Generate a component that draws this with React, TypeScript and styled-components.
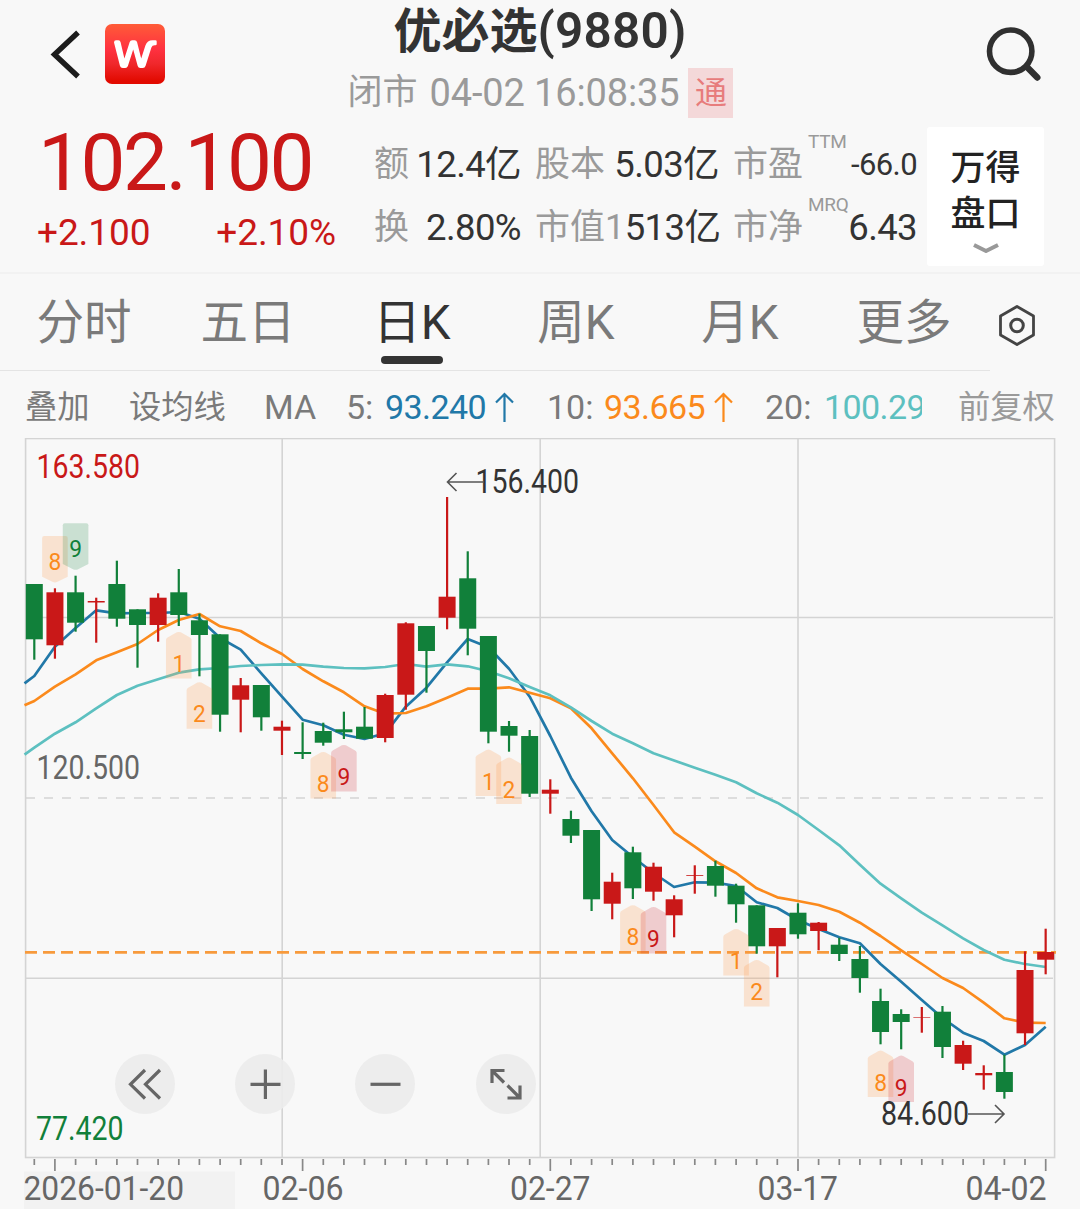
import React from "react";
import styled, { createGlobalStyle } from "styled-components";

const RED = "#c91818";
const GREEN = "#11803a";
const LINE = "#d4d4d4";
const BLUE = "#2178a8";
const ORANGE = "#fb8a1c";
const TEAL = "#5dc0c0";

const GlobalStyle = createGlobalStyle`
  * { box-sizing: border-box; }
  body {
    margin: 0;
    background: #f8f8f8;
    font-family: Roboto, "Noto Sans CJK SC", sans-serif;
  }
`;

const Screen = styled.div`
  width: 1080px;
  height: 1209px;
  overflow: hidden;
  display: flex;
  flex-direction: column;
  background: #f8f8f8;
  color: #333;
`;

/* ---------- header ---------- */

const Header = styled.header`
  height: 127px;
  display: grid;
  grid-template-columns: 240px 1fr 240px;
`;

const HeaderLeft = styled.div`
  display: flex;
  align-items: center;
  gap: 25px;
  height: 108px;
  padding-left: 50px;
`;

const HeaderRight = styled.div`
  display: flex;
  align-items: center;
  justify-content: flex-end;
  height: 108px;
  padding-right: 38px;
`;

const Logo = styled.div`
  width: 60px;
  height: 60px;
  border-radius: 7px;
  background: linear-gradient(#ff5c38, #ff3140 42%, #f0282c 66%, #e20a00 95%);
`;

const HeaderCenter = styled.div`
  display: flex;
  flex-direction: column;
  align-items: center;
`;

const Title = styled.h1`
  margin: 0;
  height: 68px;
  line-height: 62px;
  font-size: 48px;
  font-weight: 600;
  white-space: nowrap;
  span {
    font-size: 49.5px;
    letter-spacing: 0.2px;
  }
`;

const Status = styled.div`
  display: flex;
  align-items: center;
  height: 50px;
  padding-left: 1px;
  color: #9a9a9a;
  font-size: 35px;
  line-height: 52px;
  white-space: nowrap;
`;

const Clock = styled.span`
  font-size: 38px;
  margin: 0 9px 0 12px;
  letter-spacing: -0.15px;
`;

const Tag = styled.span`
  width: 45px;
  height: 50px;
  line-height: 50px;
  text-align: center;
  font-size: 32px;
  color: #e77c7c;
  background: #f4d8d9;
`;

/* ---------- quote ---------- */

const Quote = styled.section`
  height: 145px;
  display: flex;
  padding-left: 37px;
`;

const PriceBlock = styled.div`
  width: 337px;
  color: ${RED};
`;

const Price = styled.div`
  height: 76px;
  line-height: 73px;
  font-size: 80px;
  letter-spacing: -2.4px;
  padding-left: 1px;
`;

const Changes = styled.div`
  display: flex;
  justify-content: space-between;
  width: 299px;
  height: 60px;
  line-height: 60px;
  font-size: 37px;
  letter-spacing: -0.1px;
`;

const Stats = styled.div`
  display: grid;
  grid-template-columns: 147px 184px 184px;
  grid-template-rows: 63px 63px;
  column-gap: 14px;
  padding-top: 6px;
`;

const Stat = styled.div`
  display: flex;
  align-items: flex-start;
  line-height: 64px;
  white-space: nowrap;
`;

const StatLabel = styled.span`
  font-size: 35px;
  color: #9a9a9a;
`;

const StatSup = styled.sup`
  font-size: 19px;
  line-height: 20px;
  margin: -1px 0 0 5px;
  width: 0;
  letter-spacing: -0.3px;
  color: #9a9a9a;
`;

const StatValue = styled.span<{ $small?: boolean }>`
  margin-left: auto;
  font-size: ${(p) => (p.$small ? 31 : 36.5)}px;
  letter-spacing: -0.6px;
  color: #333;
`;

const OrderBook = styled.button`
  margin-left: 10px;
  width: 117px;
  height: 139px;
  border: 0;
  border-radius: 3px;
  padding: 15px 0 0;
  background: #fff;
  color: #222;
  font: 500 35px/46px "Noto Sans CJK SC", sans-serif;
  display: flex;
  flex-direction: column;
  align-items: center;
  svg { margin-top: 8px; }
`;

/* ---------- tabs ---------- */

const Tabs = styled.nav`
  height: 99px;
  display: flex;
  padding-left: 2px;
  border-top: 2px solid #f2f2f2;
  background: linear-gradient(#e4e4e4, #e4e4e4) 0 100% / 990px 1px no-repeat;
`;

const Tab = styled.div<{ $active?: boolean }>`
  width: 164px;
  display: flex;
  flex-direction: column;
  align-items: center;
  font-size: 47.5px;
  line-height: 82px;
  padding-top: 8px;
  color: ${(p) => (p.$active ? "#333" : "#7a7a7a")};
  &::after {
    content: "";
    margin-top: -8px;
    width: 62px;
    height: 8px;
    border-radius: 4px;
    background: ${(p) => (p.$active ? "#333" : "transparent")};
  }
`;

const TabSettings = styled.div`
  padding: 30px 0 0 12px;
`;

/* ---------- moving averages ---------- */

const Legend = styled.div`
  height: 67px;
  display: grid;
  grid-template-columns: 104px 135px 82px 39px 110px 52px 57px 110px 51px 59px 98px 36px 1fr;
  padding-left: 25px;
  font-size: 34px;
  line-height: 72px;
  color: #7a7a7a;
  white-space: nowrap;
`;

const LegendLink = styled.span<{ $muted?: boolean }>`
  font-size: 32.3px;
  color: ${(p) => (p.$muted ? "#9a9a9a" : "inherit")};
`;

const LegendValue = styled.span<{ $color: string }>`
  display: flex;
  align-items: center;
  overflow: hidden;
  letter-spacing: -0.6px;
  color: ${(p) => p.$color};
`;

/* ---------- chart ---------- */

const ChartArea = styled.section`
  position: relative;
  height: 771px;
`;

const ChartSvg = styled.svg`
  display: block;
`;

const Controls = styled.div`
  position: absolute;
  left: 114.5px;
  top: 616.3px;
  display: flex;
  gap: 60.4px;
`;

const RoundButton = styled.button`
  width: 60px;
  height: 60px;
  border: 0;
  border-radius: 50%;
  padding: 0;
  background: rgba(236, 236, 236, 0.93);
  svg { display: block; }
`;

type Candle = [up: 0 | 1, top: number, bottom: number, high: number, low: number];

const candles: Candle[] = [
  [0, 584, 639.3, 584, 659.7], [1, 592.3, 645.3, 588.3, 658.7], [0, 592.3, 622.7, 575.7, 631.7],
  [1, 601, 602.5, 597.7, 642.7], [0, 584, 618.7, 560.7, 626.7], [0, 609.3, 625, 609.3, 667.7],
  [1, 597.7, 625, 593.3, 641.7], [0, 592.3, 615, 569, 626], [0, 620.3, 635, 613.7, 676.3],
  [0, 634.3, 714.7, 634.3, 731.7], [1, 685.3, 699.7, 678, 732.3], [0, 685, 717.3, 685, 730.7],
  [1, 726.7, 730.7, 720.7, 755], [0, 752, 754, 722.3, 759], [0, 731, 742.7, 722.7, 745.7],
  [0, 729.3, 732.3, 711.7, 739], [0, 726.7, 738.7, 707, 738.7], [1, 695, 738, 693.7, 742.3],
  [1, 623.3, 694.7, 622.3, 709.7], [0, 626, 651, 626, 692.7], [1, 596.7, 617.7, 497, 629.3],
  [0, 578.3, 628.7, 551.3, 655.3], [0, 636, 731.7, 636, 743.3], [0, 726, 735.7, 721, 751.7],
  [0, 736, 793.7, 730, 797], [1, 789.7, 793.7, 779.3, 813.7], [0, 819, 835.7, 810.7, 843],
  [0, 830, 899.3, 830, 911], [1, 881.7, 903.7, 872.7, 919.3], [0, 852.3, 888.3, 846.7, 899],
  [1, 866.7, 891.7, 862.7, 900.7], [1, 899.3, 915.3, 895.3, 937.3], [1, 875, 875.8, 865.3, 893.7],
  [0, 866, 885.7, 860.7, 896.7], [0, 885.7, 904.3, 883.7, 922.7], [0, 905.3, 946.3, 905.3, 953.7],
  [1, 928, 946.3, 928, 977.3], [0, 912.7, 934.3, 903.3, 938.7], [1, 922.7, 931, 922, 950.3],
  [0, 944.7, 954, 937.7, 961], [0, 959, 978, 946, 992.7], [0, 1001, 1032, 988.7, 1044.3],
  [0, 1014, 1022, 1009.3, 1049.3], [1, 1017, 1017.6, 1007, 1032.7], [0, 1011.7, 1047, 1006, 1058],
  [1, 1045, 1063.7, 1040.7, 1070], [1, 1073, 1075.3, 1065.3, 1089.7], [0, 1072, 1092, 1054.7, 1098.7],
  [1, 970, 1033.3, 951.3, 1045], [1, 952, 959.7, 928.7, 974.3],
];

/* first value of every average is its level on the left edge of the plot */
const ma5 = [683.3, 676, 646.7, 628, 610.3, 613.3, 613, 613, 612, 618.7, 638, 649.7, 673.3, 696.7, 719.7, 725.3, 734.7, 739, 733.3, 706.7, 687.7, 662.3, 639, 647.3, 668.7, 696.7, 736, 777.7, 811.3, 840, 857, 873, 887, 882.3, 882.7, 886, 902.3, 908, 920, 929, 937.3, 943.3, 964, 981.7, 1000, 1018, 1032.7, 1041, 1054.7, 1045, 1026.7];
const ma10 = [705.3, 701, 686.7, 674.3, 660.3, 652.3, 644, 630, 620, 614, 626.3, 631, 643.3, 654, 669, 681.3, 692.3, 706.3, 713.7, 713, 706.3, 697.7, 688.7, 688.7, 687.3, 692.7, 698.3, 708.3, 728.3, 753.3, 778.3, 805, 832.3, 846.7, 861.3, 873, 888.3, 897.3, 901, 905, 911.7, 922.7, 936, 950.3, 964, 978, 988, 1002.7, 1018.3, 1022.7, 1023];
const ma20 = [754.7, 747.7, 733.7, 722.3, 708.3, 695, 685.7, 679.3, 672.7, 669.3, 668, 666, 665, 664.3, 664.7, 666.7, 668, 668.3, 667, 664, 666.7, 664.3, 666.3, 671.3, 678.3, 687, 695.3, 707.3, 721, 733.7, 743.3, 753.3, 760.5, 767.7, 774.7, 782.3, 793.3, 802.7, 815, 830, 845.3, 864.7, 883.7, 898.3, 912.7, 925.3, 938.3, 950, 959.7, 964, 967];

const xAt = (i: number) => 34.3 + 20.64 * i;
const toPoints = (values: number[]) =>
  values.map((y, i) => `${i === 0 ? 24.5 : xAt(i - 1).toFixed(1)},${y}`).join(" ");

type Marker = { i: number; y: number; n: string; color: string; fill: string; down?: boolean };
const soft = { color: ORANGE, fill: "rgba(255,150,70,0.22)" };
const hot = { color: RED, fill: "rgba(205,30,40,0.2)" };
const cool = { color: GREEN, fill: "rgba(20,130,60,0.2)" };

const markers: Marker[] = [
  { i: 1, y: 536, n: "8", down: true, ...soft },
  { i: 2, y: 523.3, n: "9", down: true, ...cool },
  { i: 7, y: 631.7, n: "1", ...soft },
  { i: 8, y: 682, n: "2", ...soft },
  { i: 14, y: 751.7, n: "8", ...soft },
  { i: 15, y: 744.7, n: "9", ...hot },
  { i: 22, y: 749.3, n: "1", ...soft },
  { i: 23, y: 757.3, n: "2", ...soft },
  { i: 29, y: 905, n: "8", ...soft },
  { i: 30, y: 906.7, n: "9", ...hot },
  { i: 34, y: 928.7, n: "1", ...soft },
  { i: 35, y: 959.7, n: "2", ...soft },
  { i: 41, y: 1050.3, n: "8", ...soft },
  { i: 42, y: 1055.3, n: "9", ...hot },
];

const CandleMark = ({ candle, x }: { candle: Candle; x: number }) => {
  const [up, top, bottom, high, low] = candle;
  return (
    <g fill={up ? RED : GREEN}>
      <rect x={x - 1.1} y={high} width={2.2} height={low - high} />
      <rect x={x - 8.5} y={top} width={17} height={bottom - top} />
    </g>
  );
};

const MarkerFlag = ({ m }: { m: Marker }) => {
  const x = xAt(m.i);
  const l = x - 12.8;
  const r = x + 12.8;
  const b = m.y + 46.7;
  const d = m.down
    ? `M${l + 2} ${m.y}H${r - 2}Q${r} ${m.y} ${r} ${m.y + 2}V${b - 6}L${x + 2} ${b - 0.6}Q${x} ${b} ${x - 2} ${b - 0.6}L${l} ${b - 6}V${m.y + 2}Q${l} ${m.y} ${l + 2} ${m.y}Z`
    : `M${l} ${b}V${m.y + 8}Q${l + 0.3} ${m.y + 6.5} ${l + 2} ${m.y + 5.6}L${x - 2} ${m.y + 0.6}Q${x} ${m.y} ${x + 2} ${m.y + 0.6}L${r - 2} ${m.y + 5.6}Q${r - 0.3} ${m.y + 6.5} ${r} ${m.y + 8}V${b}Z`;
  return (
    <g>
      <path d={d} fill={m.fill} />
      <text
        x={x - 6.4}
        y={m.y + (m.down ? 33.8 : 40.4)}
        fontSize={24.4}
        textLength={12.8}
        lengthAdjust="spacingAndGlyphs"
        fill={m.color}
      >
        {m.n}
      </text>
    </g>
  );
};

const Label = ({ x, y, w, fill, children }: { x: number; y: number; w: number; fill: string; children: string }) => (
  <text x={x} y={y} fontSize={33.6} textLength={w} lengthAdjust="spacingAndGlyphs" fill={fill}>
    {children}
  </text>
);

const Chart = () => (
  <ChartSvg width="1080" height="771" viewBox="0 438 1080 771">
    <g stroke={LINE} strokeWidth="1.6" fill="none">
      <rect x="25.6" y="438.5" width="1029" height="719" />
      <path d="M282.2 438.5V1157.5M540.2 438.5V1157.5M798 438.5V1157.5M25.6 617.5H1053M25.6 978.3H1053" />
      <path d="M26 798H1046" strokeDasharray="9 9" />
    </g>
    <path d="M24 952.3H1056" stroke="#f79a3c" strokeWidth="2.8" strokeDasharray="12 6" strokeDashoffset="-1" />

    <g fill="none" strokeWidth="2.7" strokeLinejoin="round">
      <polyline points={toPoints(ma5)} stroke={BLUE} />
      <polyline points={toPoints(ma10)} stroke={ORANGE} />
      <polyline points={toPoints(ma20)} stroke={TEAL} />
    </g>
    {candles.map((c, i) => (
      <CandleMark key={i} candle={c} x={xAt(i)} />
    ))}
    {markers.map((m) => (
      <MarkerFlag key={m.i} m={m} />
    ))}

    <Label x={36.5} y={478} w={103.5} fill={RED}>163.580</Label>
    <Label x={36.5} y={778.7} w={103.5} fill="#666">120.500</Label>
    <Label x={36} y={1139.7} w={87.5} fill={GREEN}>77.420</Label>
    <Label x={475.5} y={492.7} w={103.5} fill="#333">156.400</Label>
    <Label x={881} y={1125} w={88} fill="#333">84.600</Label>
    <g fill="none" stroke="#555" strokeWidth="1.6">
      <path d="M484 482H447.5M456.5 473L447.5 482L456.5 491" />
      <path d="M968 1114H1004M995 1105L1004 1114L995 1123" />
    </g>

    <path
      d={candles.map((_, i) => `M${xAt(i).toFixed(1)} 1159V${i % 12 === 1 ? 1171 : 1165}`).join("")}
      stroke="#888"
      strokeWidth="1.7"
    />
    <rect x="24" y="1171.5" width="211" height="38" fill="#f2f2f2" />
    <Label x={23.5} y={1200.3} w={160.5} fill="#666">2026-01-20</Label>
    <Label x={262.5} y={1200.3} w={81} fill="#666">02-06</Label>
    <Label x={510} y={1200.3} w={80.5} fill="#666">02-27</Label>
    <Label x={757.5} y={1200.3} w={80.5} fill="#666">03-17</Label>
    <Label x={965.5} y={1200.3} w={81} fill="#666">04-02</Label>
  </ChartSvg>
);

const controlPaths = [
  "M30 16L15.5 30.3L30 44.5M45 16L30.5 30.3L45 44.5",
  "M30.4 15.5V45M15.5 30.3H45.5",
  "M15.5 30.3H45.5",
  "M28.5 16.5H16V29M16 16.5L28 28.5M31.5 31.5L43.5 43.5M44 31.5V44H31.5",
];

const UpArrow = () => (
  <svg width="19" height="31" viewBox="0 0 19 31" fill="none" stroke="currentColor" strokeWidth="2.2">
    <path d="M9.5 30V2.5M1 10.5L9.5 2L18 10.5" />
  </svg>
);

export default function App() {
  return (
    <>
      <GlobalStyle />
      <Screen>
        <Header>
          <HeaderLeft>
            <svg width="30" height="52" viewBox="50 28 30 52" fill="none" stroke="#1c1c1c" strokeWidth="5.4">
              <path d="M78 32.5L54.5 54.5L78 76.5" />
            </svg>
            <Logo>
              <svg width="60" height="60" viewBox="0 0 60 60" fill="#fff">
                <path d="M9 18.5Q9 16.3 11 16.3H13.4Q15.2 16.3 15.6 18.2L19.4 34.4L24.6 18.3Q25.2 16.3 27.2 16.3H29.6Q31.6 16.3 32.1 18.3L36.2 34.4L40.4 21.6Q42.2 16.3 47.6 16.3H50.4Q51.7 16.3 51.7 17.5V20Q51.7 21.2 50.4 21.2H49.6Q47.2 21.2 46.4 23.6L40.6 41.8Q39.9 44 37.8 44H35.3Q33.3 44 32.7 41.9L28.2 25.4L22.9 41.9Q22.2 44 20.2 44H17.8Q15.6 44 15 41.9Z" />
              </svg>
            </Logo>
          </HeaderLeft>
          <HeaderCenter>
            <Title>优必选<span>(9880)</span></Title>
            <Status>
              闭市<Clock>04-02 16:08:35</Clock>
              <Tag>通</Tag>
            </Status>
          </HeaderCenter>
          <HeaderRight>
            <svg width="56" height="56" viewBox="986 26 56 56" fill="none" stroke="#303030">
              <circle cx="1010.7" cy="51.2" r="21.2" strokeWidth="5.6" />
              <path d="M1026.5 66.5L1037.3 77.5" strokeWidth="6.4" strokeLinecap="round" />
            </svg>
          </HeaderRight>
        </Header>

        <Quote>
          <PriceBlock>
            <Price>102.100</Price>
            <Changes>
              <span>+2.100</span>
              <span>+2.10%</span>
            </Changes>
          </PriceBlock>
          <Stats>
            <Stat><StatLabel>额</StatLabel><StatValue>12.4亿</StatValue></Stat>
            <Stat><StatLabel>股本</StatLabel><StatValue>5.03亿</StatValue></Stat>
            <Stat><StatLabel>市盈</StatLabel><StatSup>TTM</StatSup><StatValue $small>-66.0</StatValue></Stat>
            <Stat><StatLabel>换</StatLabel><StatValue>2.80%</StatValue></Stat>
            <Stat><StatLabel>市值1</StatLabel><StatValue>513亿</StatValue></Stat>
            <Stat><StatLabel>市净</StatLabel><StatSup>MRQ</StatSup><StatValue>6.43</StatValue></Stat>
          </Stats>
          <OrderBook>
            <span>万得</span>
            <span>盘口</span>
            <svg width="28" height="14" viewBox="0 0 28 14" fill="none" stroke="#999" strokeWidth="4">
              <path d="M2 3L14 9L26 3" strokeLinejoin="round" />
            </svg>
          </OrderBook>
        </Quote>

        <Tabs>
          <Tab>分时</Tab>
          <Tab>五日</Tab>
          <Tab $active>日K</Tab>
          <Tab>周K</Tab>
          <Tab>月K</Tab>
          <Tab>更多</Tab>
          <TabSettings>
            <svg width="38" height="44" viewBox="0 0 38 44" fill="none" stroke="#444" strokeLinejoin="round">
              <path d="M19 2.5L35.5 12V31L19 40.5L2.5 31V12Z" strokeWidth="2.8" />
              <circle cx="19" cy="21.5" r="6.3" strokeWidth="3" />
            </svg>
          </TabSettings>
        </Tabs>

        <Legend>
          <LegendLink>叠加</LegendLink>
          <LegendLink>设均线</LegendLink>
          <span>MA</span>
          <span>5:</span>
          <LegendValue $color={BLUE}>93.240</LegendValue>
          <LegendValue $color={BLUE}><UpArrow /></LegendValue>
          <span>10:</span>
          <LegendValue $color={ORANGE}>93.665</LegendValue>
          <LegendValue $color={ORANGE}><UpArrow /></LegendValue>
          <span>20:</span>
          <LegendValue $color={TEAL}>100.290</LegendValue>
          <span />
          <LegendLink $muted>前复权</LegendLink>
        </Legend>

        <ChartArea>
          <Chart />
          <Controls>
            {controlPaths.map((d) => (
              <RoundButton key={d}>
                <svg width="60" height="60" viewBox="0 0 60 60" fill="none" stroke="#666" strokeWidth="3.2">
                  <path d={d} />
                </svg>
              </RoundButton>
            ))}
          </Controls>
        </ChartArea>
      </Screen>
    </>
  );
}
